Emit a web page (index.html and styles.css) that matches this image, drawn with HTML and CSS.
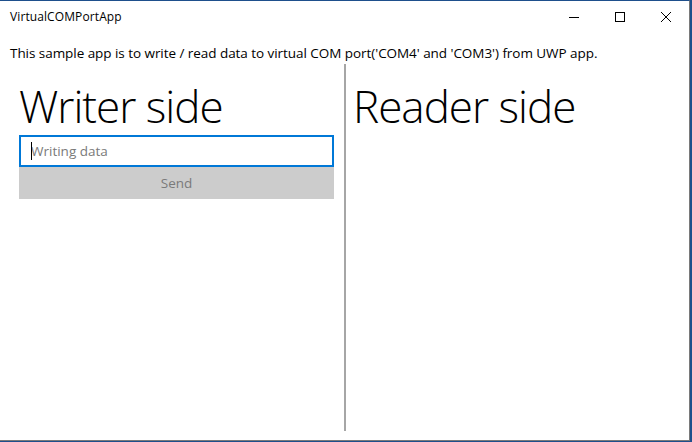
FILE: index.html
```html
<!DOCTYPE html>
<html lang="en">

<head>
    <meta charset="UTF-8">
    <title>VirtualCOMPortApp</title>
    <link rel="stylesheet" href="styles.css">
</head>

<body>
    <div class="window">
        <!-- Title bar -->
        <div class="titlebar">
            <span class="title">VirtualCOMPortApp</span>
            <div class="caption-buttons">
                <span class="cap-btn">
                    <svg width="10" height="10" viewBox="0 0 10 10"><path d="M0 5.5h10" stroke="#000" stroke-width="1" /></svg>
                </span>
                <span class="cap-btn">
                    <svg width="10" height="10" viewBox="0 0 10 10"><rect x="0.5" y="0.5" width="9" height="9" fill="none" stroke="#000" stroke-width="1" /></svg>
                </span>
                <span class="cap-btn">
                    <svg width="10" height="10" viewBox="0 0 10 10"><path d="M0 0L10 10M10 0L0 10" stroke="#000" stroke-width="1" /></svg>
                </span>
            </div>
        </div>

        <p class="intro">This sample app is to write / read data to virtual COM port('COM4' and 'COM3') from UWP app.</p>

        <div class="panes">
            <div class="pane writer">
                <h1>Writer side</h1>
                <div class="input-box">
                    <span class="caret"></span>
                    <input type="text" placeholder="Writing data" />
                </div>
                <button class="send-btn" disabled>Send</button>
            </div>
            <div class="pane reader">
                <h1>Reader side</h1>
            </div>
        </div>
    </div>
</body>

</html>
```

FILE: styles.css
```css
* {
    box-sizing: border-box;
    font-family: 'Open Sans', 'Noto Sans', sans-serif;
}

html,
body {
    margin: 0;
    padding: 0;
    background: #1e4f8c;
}

.window {
    width: 690px;
    height: 441px;
    background: #fff;
    border-top: 1px solid #1e4f8c;
    border-right: 1px solid #7a7a7a;
    border-bottom: 1px solid #7a7a7a;
    display: flex;
    flex-direction: column;
}

.titlebar {
    height: 31px;
    display: flex;
    align-items: center;
    justify-content: space-between;
    padding-left: 10px;
}

.title {
    font-size: 12px;
    color: #000;
    letter-spacing: 0.1px;
}

.caption-buttons {
    display: flex;
    height: 100%;
}

.cap-btn {
    width: 46px;
    height: 100%;
    display: flex;
    align-items: center;
    justify-content: center;
}

.intro {
    margin: 12px 0 0 10px;
    font-size: 13.5px;
    letter-spacing: -0.05px;
    color: #000;
    line-height: 18px;
}

.panes {
    flex: 1;
    display: flex;
    margin-top: 2px;
    padding-bottom: 9px;
}

.pane {
    display: flex;
    flex-direction: column;
}

.writer {
    width: 346px;
    padding: 14px 12px 0 19px;
    border-right: 2px solid #a6a6a6;
}

.reader {
    flex: 1;
    padding: 14px 0 0 7px;
}

h1 {
    margin: 0;
    font-size: 44px;
    font-weight: 300;
    line-height: 56px;
    letter-spacing: -1px;
    color: #000;
}

.input-box {
    position: relative;
    margin-top: 1px;
    height: 32px;
    width: 315px;
    border: 2px solid #0078d7;
    display: flex;
    align-items: center;
}

.input-box input {
    border: none;
    outline: none;
    width: 100%;
    padding: 0 0 0 10px;
    font-size: 13.5px;
    background: transparent;
}

.input-box input::placeholder {
    color: #7a7a7a;
}

.caret {
    position: absolute;
    left: 10px;
    top: 5px;
    width: 1px;
    height: 18px;
    background: #000;
}

.send-btn {
    width: 315px;
    height: 32px;
    border: none;
    background: #cccccc;
    color: #7a7a7a;
    font-size: 13.5px;
    padding: 0;
}
```
